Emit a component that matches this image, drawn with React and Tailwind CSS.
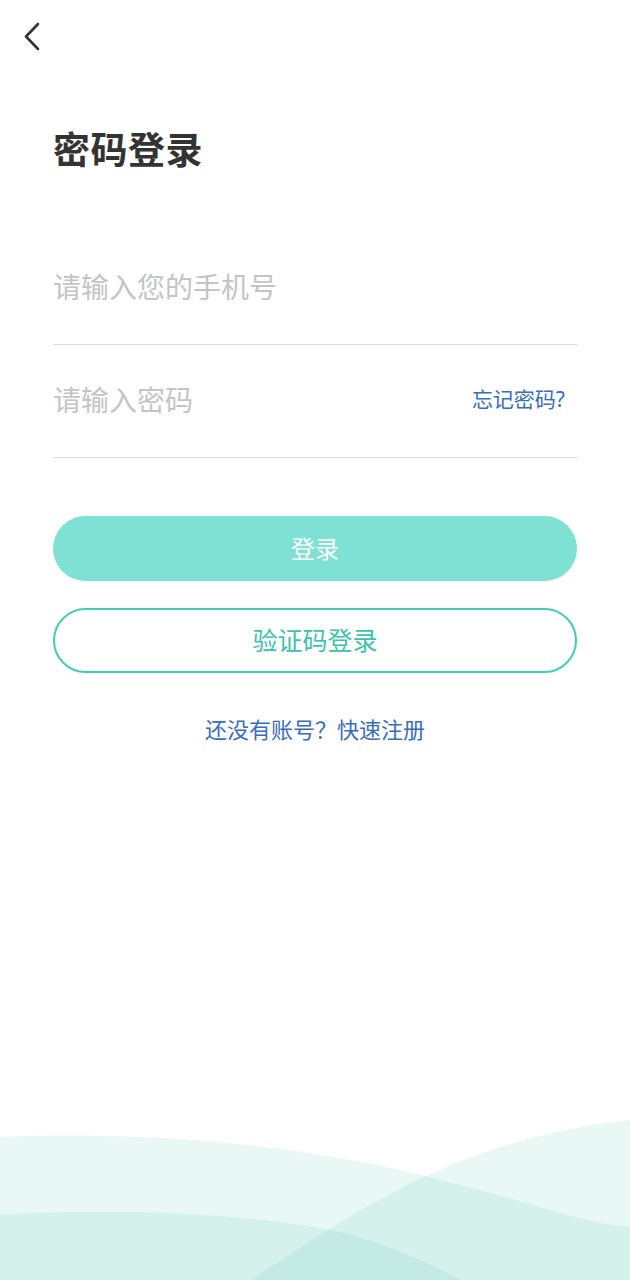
import { useState } from 'react'

function Waves() {
    return (
        <svg
            className="absolute bottom-0 left-0 w-full h-[160px]"
            viewBox="0 0 630 160"
            preserveAspectRatio="none"
        >
            {/* back band */}
            <path d="M0 17 C 150 11, 300 24, 433 58 S 580 102, 630 107 L630 160 L0 160 Z" fill="rgba(35,185,155,0.1)" />
            {/* rising wave on the right */}
            <path d="M250 160 C 330 112, 440 20, 630 0 L630 160 Z" fill="rgba(35,185,155,0.1)" />
            {/* front band */}
            <path d="M0 95 C 120 87, 260 94, 345 113 Q 400 128, 462 160 L0 160 Z" fill="rgba(35,185,155,0.1)" />
        </svg>
    )
}

function App() {
    const [phone, setPhone] = useState('')
    const [password, setPassword] = useState('')

    return (
        <div
            className="relative h-[1280px] w-full overflow-hidden bg-white"
            style={{ fontFamily: '"Noto Sans", "Noto Sans CJK SC", sans-serif' }}
        >
            <Waves />

            {/* Header */}
            <div className="relative h-[72px] px-[18px] pt-[18px]">
                <button className="w-[28px] h-[36px] flex items-center justify-center">
                    <svg width="20" height="32" viewBox="0 0 20 32" fill="none">
                        <path d="M16 4 L4 16.5 L16 29" stroke="#333" strokeWidth="2.6" strokeLinecap="round" strokeLinejoin="round" />
                    </svg>
                </button>
            </div>

            <div className="relative px-[53px] pt-[54px]">
                <h1 className="text-[37px] leading-[48px] font-bold text-[#333] tracking-[0.5px]">密码登录</h1>

                {/* Phone */}
                <div className="mt-[58px] h-[113px] flex items-center border-b-[1.5px] border-[#d9d9d9] pb-[2px]">
                    <input
                        value={phone}
                        onChange={e => setPhone(e.target.value)}
                        placeholder="请输入您的手机号"
                        className="w-full text-[28px] text-[#333] placeholder:text-[#c4c4c4] outline-none bg-transparent"
                    />
                </div>

                {/* Password */}
                <div className="h-[113px] flex items-center border-b-[1.5px] border-[#d9d9d9] pb-[2px]">
                    <input
                        type="password"
                        value={password}
                        onChange={e => setPassword(e.target.value)}
                        placeholder="请输入密码"
                        className="flex-1 text-[28px] text-[#333] placeholder:text-[#c4c4c4] outline-none bg-transparent"
                    />
                    <span className="text-[21px] text-[#3b6fb6] pr-[12px]">忘记密码?</span>
                </div>

                <button className="mt-[58px] w-full h-[65px] rounded-full bg-[#7fe1d3] text-white text-[24px]">
                    登录
                </button>

                <button className="mt-[27px] w-full h-[65px] rounded-full border-2 border-[#44cbb6] text-[#3fc2ab] text-[25px]">
                    验证码登录
                </button>

                <p className="mt-[40px] text-center text-[22px] text-[#3b6db7]">还没有账号？快速注册</p>
            </div>
        </div>
    )
}

export default App
